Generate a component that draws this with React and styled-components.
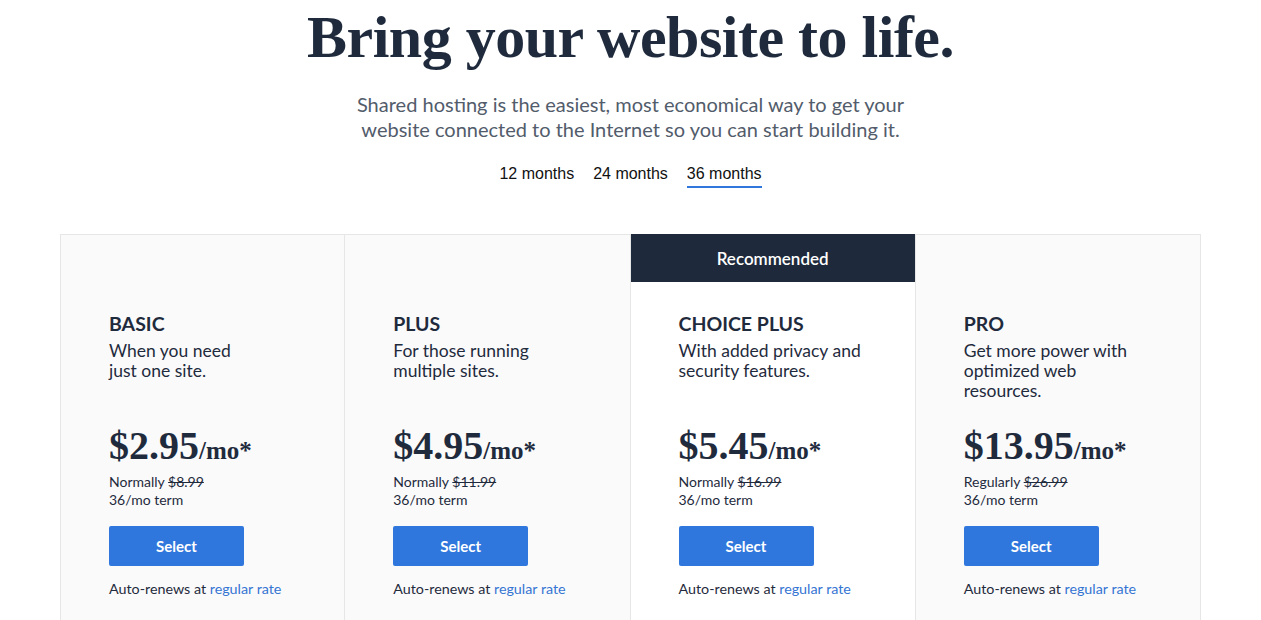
import React from "react";
import styled, { createGlobalStyle } from "styled-components";

const Global = createGlobalStyle`
  html, body { margin: 0; padding: 0; background: #fff; }
  body { font-family: "Lato", "Open Sans", sans-serif; color: #1f2b3d; }
`;

const Page = styled.main`
  display: flex;
  flex-direction: column;
  align-items: center;
  padding-top: 1px;
`;

const Title = styled.h1`
  margin: 0;
  font-family: "Liberation Serif", "Times New Roman", serif;
  font-weight: 700;
  font-size: 60px;
  line-height: 72px;
  color: #1f2b3d;
  letter-spacing: -0.5px;
`;

const Subtitle = styled.p`
  margin: 19px 0 0;
  width: 600px;
  text-align: center;
  font-size: 20px;
  line-height: 25px;
  color: #525c6b;
`;

const Tabs = styled.nav`
  display: flex;
  gap: 19px;
  margin-top: 18px;
`;

const Tab = styled.button`
  border: none;
  background: none;
  padding: 4px 0 3px;
  font-family: "Liberation Sans", Arial, sans-serif;
  font-size: 16px;
  line-height: 19px;
  color: #111;
  border-bottom: 2px solid ${(p) => (p.$active ? "#2f77dc" : "transparent")};
  cursor: pointer;
`;

const Grid = styled.section`
  align-self: stretch;
  margin: 46px 60px 0;
  display: grid;
  grid-template-columns: repeat(4, 1fr);
`;

const Card = styled.article`
  background: ${(p) => (p.$featured ? "#fff" : "#fafafa")};
  border: 1px solid #e6e6e6;
  border-top: ${(p) => (p.$featured ? "none" : "1px solid #e6e6e6")};
  border-left: ${(p) => (p.$first ? "1px solid #e6e6e6" : "none")};
  padding-bottom: 40px;
`;

const Banner = styled.div`
  height: 48px;
  background: #1e2a3b;
  color: #fff;
  display: flex;
  align-items: center;
  justify-content: center;
  font-size: 17px;
  font-weight: 600;
`;

const Spacer = styled.div`
  height: 47px;
`;

const Body = styled.div`
  padding: 31px 48px 0;
`;

const PlanName = styled.h2`
  margin: 0;
  font-size: 19.5px;
  line-height: 22px;
  font-weight: 700;
  color: #1f2b3d;
`;

const Desc = styled.p`
  margin: 6px 0 0;
  height: 80px;
  font-size: 17.5px;
  line-height: 20px;
  color: #1f2b3d;
`;

const Price = styled.div`
  margin-top: 3px;
  font-family: "Liberation Serif", "Times New Roman", serif;
  font-weight: 700;
  font-size: 40px;
  line-height: 44px;
  color: #1f2b3d;
`;

const Per = styled.span`
  font-size: 25px;
`;

const Note = styled.p`
  margin: 0;
  font-size: 14px;
  line-height: 18px;
  color: #1f2b3d;
`;

const Old = styled.s`
  text-decoration: line-through;
`;

const SelectBtn = styled.button`
  margin-top: 17px;
  width: 135px;
  height: 40px;
  border: none;
  border-radius: 2px;
  background: #2f77dc;
  color: #fff;
  font-family: "Lato", sans-serif;
  font-weight: 700;
  font-size: 15px;
  cursor: pointer;
`;

const Renew = styled.p`
  margin: 14px 0 0;
  font-size: 14.3px;
  line-height: 18px;
  color: #1f2b3d;
`;

const Link = styled.a`
  color: #3575d3;
  text-decoration: none;
`;

const plans = [
  { name: "BASIC", desc: ["When you need", "just one site."], price: "$2.95", label: "Normally", old: "$8.99" },
  { name: "PLUS", desc: ["For those running", "multiple sites."], price: "$4.95", label: "Normally", old: "$11.99" },
  { name: "CHOICE PLUS", desc: ["With added privacy and", "security features."], price: "$5.45", label: "Normally", old: "$16.99", featured: true },
  { name: "PRO", desc: ["Get more power with", "optimized web", "resources."], price: "$13.95", label: "Regularly", old: "$26.99" },
];

export default function App() {
  return (
    <>
      <Global />
      <Page>
        <Title>Bring your website to life.</Title>
        <Subtitle>
          Shared hosting is the easiest, most economical way to get your
          <br />
          website connected to the Internet so you can start building it.
        </Subtitle>
        <Tabs>
          <Tab>12 months</Tab>
          <Tab>24 months</Tab>
          <Tab $active>36 months</Tab>
        </Tabs>
        <Grid>
          {plans.map((p, i) => (
            <Card key={p.name} $featured={p.featured} $first={i === 0}>
              {p.featured ? <Banner>Recommended</Banner> : <Spacer />}
              <Body>
                <PlanName>{p.name}</PlanName>
                <Desc>
                  {p.desc.map((l, j) => (
                    <React.Fragment key={j}>
                      {l}
                      {j < p.desc.length - 1 && <br />}
                    </React.Fragment>
                  ))}
                </Desc>
                <Price>
                  {p.price}
                  <Per>/mo*</Per>
                </Price>
                <Note>
                  {p.label} <Old>{p.old}</Old>
                  <br />
                  36/mo term
                </Note>
                <SelectBtn>Select</SelectBtn>
                <Renew>
                  Auto-renews at <Link href="#">regular rate</Link>
                </Renew>
              </Body>
            </Card>
          ))}
        </Grid>
      </Page>
    </>
  );
}
